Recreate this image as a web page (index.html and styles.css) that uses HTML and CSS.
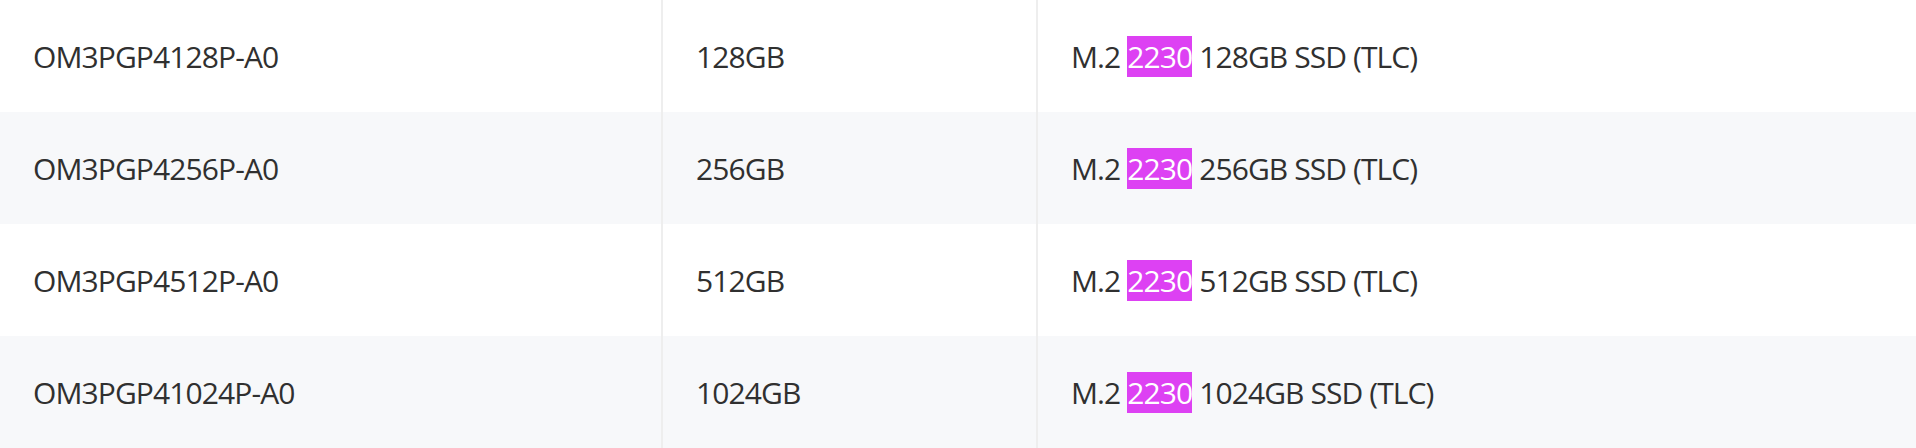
FILE: index.html
```html
<!DOCTYPE html>
<html>
<head>
<meta charset="utf-8">
<link rel="stylesheet" href="styles.css">
</head>
<body>
<table class="spec">
  <tbody>
    <tr>
      <td class="c1">OM3PGP4128P-A0</td>
      <td class="c2">128GB</td>
      <td class="c3">M.2 <mark class="hl">2230</mark> 128GB SSD (TLC)</td>
    </tr>
    <tr>
      <td class="c1">OM3PGP4256P-A0</td>
      <td class="c2">256GB</td>
      <td class="c3">M.2 <mark class="hl">2230</mark> 256GB SSD (TLC)</td>
    </tr>
    <tr>
      <td class="c1">OM3PGP4512P-A0</td>
      <td class="c2">512GB</td>
      <td class="c3">M.2 <mark class="hl">2230</mark> 512GB SSD (TLC)</td>
    </tr>
    <tr>
      <td class="c1">OM3PGP41024P-A0</td>
      <td class="c2">1024GB</td>
      <td class="c3">M.2 <mark class="hl">2230</mark> 1024GB SSD (TLC)</td>
    </tr>
  </tbody>
</table>
</body>
</html>
```
FILE: styles.css
```css
html, body {
  margin: 0;
  padding: 0;
  background: #ffffff;
}
.spec {
  width: 1916px;
  border-collapse: collapse;
  table-layout: fixed;
  font-family: "Open Sans", "Noto Sans", sans-serif;
  font-size: 30px;
  letter-spacing: -0.9px;
  color: #303030;
}
.spec tr {
  height: 112px;
}
.spec tr:nth-child(even) {
  background: #f7f8fa;
}
.spec td {
  box-sizing: border-box;
  padding: 0 0 0 33px;
  vertical-align: middle;
  white-space: nowrap;
  border-left: 2px solid #eeeeee;
}
.spec td.c1 {
  width: 662px;
  border-left: none;
}
.spec td.c2 {
  width: 375px;
}
.hl {
  background: #dd41f3;
  color: #ffffff;
  padding: 0;
  letter-spacing: -0.9px;
}
```
